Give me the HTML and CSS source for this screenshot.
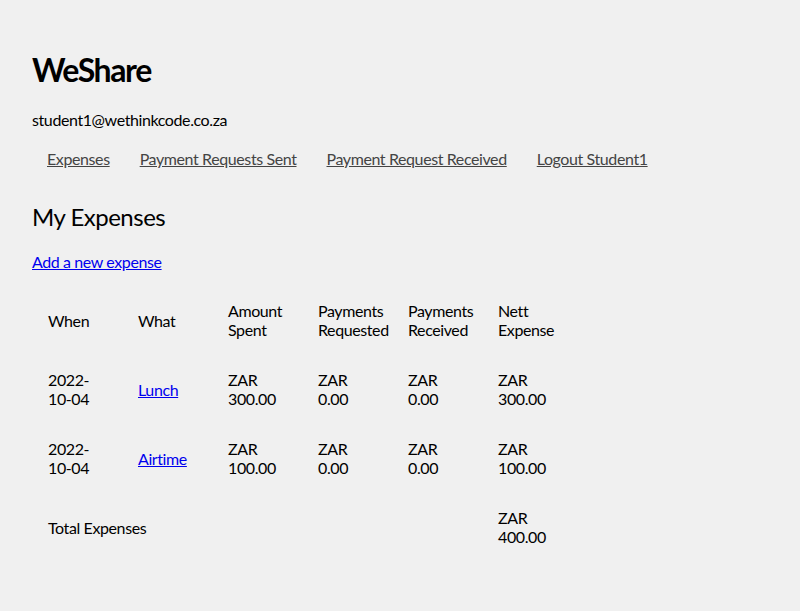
FILE: index.html
```html
<!DOCTYPE html>
<html lang="en">
<head>
<meta charset="utf-8">
<title>WeShare</title>
<link rel="stylesheet" href="styles.css">
</head>
<body>
<div class="page">
  <h1 class="title">WeShare</h1>
  <p class="user">student1@wethinkcode.co.za</p>
  <nav class="nav">
    <a class="nav-link" href="#">Expenses</a>
    <a class="nav-link" href="#">Payment Requests Sent</a>
    <a class="nav-link" href="#">Payment Request Received</a>
    <a class="nav-link" href="#">Logout Student1</a>
  </nav>
  <h2 class="section-title">My Expenses</h2>
  <p class="add"><a class="link" href="#">Add a new expense</a></p>
  <table class="expenses">
    <colgroup>
      <col class="col"><col class="col"><col class="col"><col class="col"><col class="col"><col class="col">
    </colgroup>
    <tr class="row head">
      <td class="cell">When</td>
      <td class="cell">What</td>
      <td class="cell">Amount Spent</td>
      <td class="cell">Payments Requested</td>
      <td class="cell">Payments Received</td>
      <td class="cell">Nett Expense</td>
    </tr>
    <tr class="row">
      <td class="cell">2022-10-04</td>
      <td class="cell"><a class="link" href="#">Lunch</a></td>
      <td class="cell">ZAR 300.00</td>
      <td class="cell">ZAR 0.00</td>
      <td class="cell">ZAR 0.00</td>
      <td class="cell">ZAR 300.00</td>
    </tr>
    <tr class="row">
      <td class="cell">2022-10-04</td>
      <td class="cell"><a class="link" href="#">Airtime</a></td>
      <td class="cell">ZAR 100.00</td>
      <td class="cell">ZAR 0.00</td>
      <td class="cell">ZAR 0.00</td>
      <td class="cell">ZAR 100.00</td>
    </tr>
    <tr class="row">
      <td class="cell" colspan="5">Total Expenses</td>
      <td class="cell">ZAR 400.00</td>
    </tr>
  </table>
</div>
</body>
</html>
```

FILE: styles.css
```css
html, body {
  margin: 0;
  padding: 0;
  background: #f0f0f0;
}
::-webkit-scrollbar {
  width: 15px;
}
::-webkit-scrollbar-track {
  background: #fafafa;
  border-left: 1px solid #e8e8e8;
}
::-webkit-scrollbar-thumb {
  background: #c1c1c1;
  border-radius: 8px;
  border: 4px solid transparent;
  border-left-width: 5px;
  border-right-width: 3px;
  background-clip: padding-box;
}
body {
  font-family: "Lato", "Noto Sans", sans-serif;
  font-size: 16px;
  line-height: 19px;
  letter-spacing: -0.4px;
  color: #000;
}
.page {
  padding: 50px 32px 78px;
}
.title {
  margin: 0;
  font-size: 32px;
  line-height: 40px;
  font-weight: 700;
  letter-spacing: -1.4px;
}
.user {
  margin: 19.5px 0 0;
}
.nav {
  margin-top: 20px;
  display: flex;
  padding-left: 15px;
  gap: 30px;
}
.nav-link {
  color: #444;
  text-decoration: underline;
}
.section-title {
  margin: 34.5px 0 0;
  font-size: 24px;
  line-height: 30px;
  font-weight: 400;
  letter-spacing: -0.5px;
}
.add {
  margin: 19.5px 0 0;
}
.link {
  color: #0000ee;
  text-decoration: underline;
}
.expenses {
  margin-top: 15px;
  border-collapse: collapse;
  table-layout: fixed;
  width: 540px;
}
.col {
  width: 90px;
}
.cell {
  padding: 15.5px 24px 15.5px 16px;
  vertical-align: middle;
  text-align: left;
  height: 38px;
}
```
